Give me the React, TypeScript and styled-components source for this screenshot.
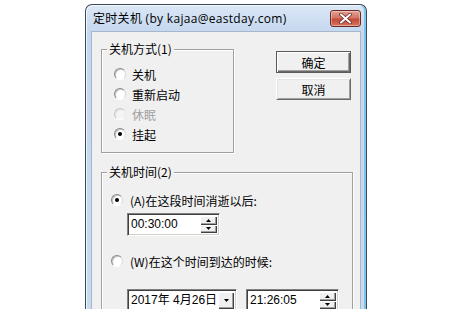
import React from 'react';
import styled, { createGlobalStyle } from 'styled-components';

const GlobalStyle = createGlobalStyle`
  html, body { margin: 0; padding: 0; background: #fff; overflow: hidden; }
  body { font-family: "Noto Sans CJK SC", "Noto Sans", sans-serif; font-size: 12px; color: #000; }
  * { box-sizing: border-box; }
`;

const Page = styled.div`
  width: 450px;
  height: 309px;
  overflow: hidden;
  background: #fff;
  padding: 4px 0 0 85px;
`;

const Window = styled.div`
  width: 282px;
  border: 1px solid #3b4858;
  border-bottom: none;
  border-radius: 7px 7px 0 0;
  background: linear-gradient(#dae7f6, #c4d7ee 28px, #c9dbef);
  box-shadow: inset 1px 1px 0 rgba(255, 255, 255, 0.75), inset -2px 0 0 #7cc6ee;
  padding: 0 5px 0 5px;
  display: flex;
  flex-direction: column;
`;

const TitleBar = styled.div`
  flex: none;
  height: 26px;
  display: flex;
  align-items: center;
  justify-content: space-between;
  padding: 1px 0 0 2px;
`;

const TitleText = styled.span`
  font-family: "Open Sans", "Noto Sans CJK SC", sans-serif;
  font-size: 12px;
  line-height: 14px;
  letter-spacing: 0.3px;
  color: #000;
`;

const CloseButton = styled.div`
  width: 31px;
  height: 17px;
  border: 1px solid #6b2a22;
  border-radius: 3px;
  background: linear-gradient(#e3a295, #d27565 45%, #c44a38 55%, #d7735f);
  box-shadow: inset 0 0 0 1px rgba(255, 255, 255, 0.35);
  display: flex;
  align-items: center;
  justify-content: center;
`;

const Client = styled.div`
  background: #f0f0f0;
  border: 1px solid #a6b7cb;
  border-bottom: none;
  padding-left: 9px;
  display: flex;
  flex-direction: column;
`;

const TopRow = styled.div`
  display: flex;
  align-items: flex-start;
`;

const GroupBox = styled.div<{ $width: number; $top: number }>`
  position: relative;
  width: ${p => p.$width}px;
  margin-top: ${p => p.$top}px;
  border: 1px solid #a0a0a0;
  box-shadow: inset 1px 1px 0 #fff, 1px 1px 0 #fff;
`;

const GroupLabel = styled.span`
  position: absolute;
  top: -8px;
  left: 5px;
  padding: 0 2px;
  background: #f0f0f0;
  line-height: 14px;
`;

const RadioList = styled.div`
  padding: 14px 0 8px 0;
`;

const RadioRow = styled.div<{ $indent: number; $disabled?: boolean; $top?: number }>`
  height: 20px;
  display: flex;
  align-items: center;
  padding-left: ${p => p.$indent}px;
  margin-top: ${p => p.$top ?? 0}px;
  color: ${p => (p.$disabled ? '#a0a0a0' : '#000')};
`;

const RadioCircle = styled.span<{ $checked?: boolean; $disabled?: boolean; $gap: number }>`
  position: relative;
  width: 12px;
  height: 12px;
  margin-right: ${p => p.$gap}px;
  border-radius: 50%;
  border: 1px solid;
  border-color: ${p => (p.$disabled ? '#c8c8c8 #e8e8e8 #fff #c8c8c8' : '#8a8a8a #d8d8d8 #fff #8a8a8a')};
  background: ${p => (p.$disabled ? '#f4f4f4' : '#fff')};
  box-shadow: inset 1px 1px 0 ${p => (p.$disabled ? '#e0e0e0' : '#c4c4c4')};
  flex: none;
  &::after {
    content: '';
    display: ${p => (p.$checked ? 'block' : 'none')};
    position: absolute;
    left: 3px;
    top: 3px;
    width: 4px;
    height: 4px;
    border-radius: 50%;
    background: #000;
  }
`;

const ButtonCol = styled.div`
  margin: 19px 0 0 42px;
  display: flex;
  flex-direction: column;
  gap: 5px;
`;

const PushButton = styled.div<{ $default?: boolean }>`
  width: 75px;
  height: 22px;
  display: flex;
  align-items: center;
  justify-content: center;
  background: #f0f0f0;
  border: 1px solid;
  border-color: ${p => (p.$default ? '#5a5a5a' : '#fff #696969 #696969 #fff')};
  box-shadow: ${p =>
    p.$default
      ? 'inset 1px 1px 0 #fff, inset -1px -1px 0 #696969, inset -2px -2px 0 #a0a0a0'
      : 'inset 1px 1px 0 #e3e3e3, inset -1px -1px 0 #a0a0a0'};
  font-size: 12px;
`;

const TimeBody = styled.div`
  padding: 17px 0 40px 0;
  display: flex;
  flex-direction: column;
`;

const FieldRow = styled.div<{ $top: number }>`
  display: flex;
  gap: 9px;
  margin: ${p => p.$top}px 0 0 25px;
`;

const EditBox = styled.div<{ $width: number }>`
  width: ${p => p.$width}px;
  height: 23px;
  display: flex;
  align-items: stretch;
  background: #fff;
  border: 1px solid;
  border-color: #808080 #fff #fff #808080;
  box-shadow: inset 1px 1px 0 #404040, inset -1px -1px 0 #d4d0c8;
  padding: 2px;
`;

const EditText = styled.span`
  flex: 1;
  font-family: "Liberation Sans", "Noto Sans CJK SC", sans-serif;
  font-size: 12px;
  line-height: 17px;
  padding-left: 1px;
  white-space: nowrap;
`;

const Spinner = styled.div`
  width: 17px;
  display: flex;
  flex-direction: column;
`;

const SpinButton = styled.div`
  flex: 1;
  display: flex;
  align-items: center;
  justify-content: center;
  background: #f0f0f0;
  box-shadow: inset 1px 1px 0 #fff, inset -1px -1px 0 #404040, inset -2px -2px 0 #a0a0a0;
`;

const DropButton = styled(SpinButton)`
  flex: none;
  width: 16px;
`;

const Arrow = ({ down }: { down?: boolean }) => (
  <svg width="5" height="3" viewBox="0 0 5 3">
    <path d={down ? 'M0 0h5L2.5 3z' : 'M0 3h5L2.5 0z'} fill="#000" />
  </svg>
);

const CloseGlyph = () => (
  <svg width="13" height="11" viewBox="0 0 13 11">
    <path d="M2 1.5L11 9.5M11 1.5L2 9.5" stroke="#6a2a25" strokeWidth="3.6" strokeLinecap="round" />
    <path d="M2 1.5L11 9.5M11 1.5L2 9.5" stroke="#fff" strokeWidth="2" strokeLinecap="round" />
  </svg>
);

const modes = [
  { label: '关机' },
  { label: '重新启动' },
  { label: '休眠', disabled: true },
  { label: '挂起', checked: true },
];

export default function App() {
  return (
    <Page>
      <GlobalStyle />
      <Window>
        <TitleBar>
          <TitleText>定时关机 (by kajaa@eastday.com)</TitleText>
          <CloseButton>
            <CloseGlyph />
          </CloseButton>
        </TitleBar>
        <Client>
          <TopRow>
            <GroupBox $width={133} $top={17}>
              <GroupLabel>关机方式(1)</GroupLabel>
              <RadioList>
                {modes.map(m => (
                  <RadioRow key={m.label} $indent={12} $disabled={m.disabled}>
                    <RadioCircle $gap={6} $checked={m.checked} $disabled={m.disabled} />
                    {m.label}
                  </RadioRow>
                ))}
              </RadioList>
            </GroupBox>
            <ButtonCol>
              <PushButton $default>确定</PushButton>
              <PushButton>取消</PushButton>
            </ButtonCol>
          </TopRow>

          <GroupBox $width={252} $top={19}>
            <GroupLabel>关机时间(2)</GroupLabel>
            <TimeBody>
              <RadioRow $indent={9}>
                <RadioCircle $gap={7} $checked />
                (A)在这段时间消逝以后:
              </RadioRow>
              <FieldRow $top={3}>
                <EditBox $width={93}>
                  <EditText>00:30:00</EditText>
                  <Spinner>
                    <SpinButton>
                      <Arrow />
                    </SpinButton>
                    <SpinButton>
                      <Arrow down />
                    </SpinButton>
                  </Spinner>
                </EditBox>
              </FieldRow>
              <RadioRow $indent={9} $top={15}>
                <RadioCircle $gap={7} />
                (W)在这个时间到达的时候:
              </RadioRow>
              <FieldRow $top={18}>
                <EditBox $width={110}>
                  <EditText>2017年 4月26日</EditText>
                  <DropButton>
                    <Arrow down />
                  </DropButton>
                </EditBox>
                <EditBox $width={93}>
                  <EditText>21:26:05</EditText>
                  <Spinner>
                    <SpinButton>
                      <Arrow />
                    </SpinButton>
                    <SpinButton>
                      <Arrow down />
                    </SpinButton>
                  </Spinner>
                </EditBox>
              </FieldRow>
            </TimeBody>
          </GroupBox>
        </Client>
      </Window>
    </Page>
  );
}
